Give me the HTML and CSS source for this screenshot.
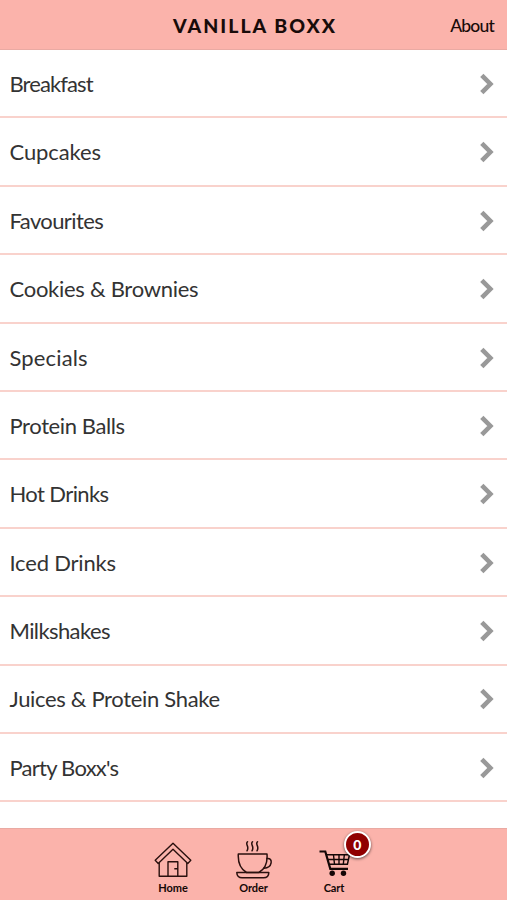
FILE: index.html
```html
<!DOCTYPE html>
<html lang="en">
<head>
    <meta charset="UTF-8">
    <meta name="viewport" content="width=device-width, initial-scale=1.0">
    <title>Vanilla Boxx</title>
    <link rel="stylesheet" href="styles.css">
</head>
<body>
<svg class="symbols" width="0" height="0">
    <symbol id="chevron" viewBox="0 0 16 22">
        <path d="M2.800 2.300 11.400 11 2.800 19.700" fill="none" stroke="#999" stroke-width="4.600"/>
    </symbol>
</svg>

<div class="header">
    <h1>VANILLA BOXX</h1>
    <a class="about" href="#">About</a>
</div>

<div class="menu">
    <a class="item" href="#"><span class="breakfast">Breakfast</span><svg class="chevron"><use href="#chevron"/></svg></a>
    <a class="item" href="#"><span class="cupcakes">Cupcakes</span><svg class="chevron"><use href="#chevron"/></svg></a>
    <a class="item" href="#"><span class="favourites">Favourites</span><svg class="chevron"><use href="#chevron"/></svg></a>
    <a class="item" href="#"><span class="cookies">Cookies &amp; Brownies</span><svg class="chevron"><use href="#chevron"/></svg></a>
    <a class="item" href="#"><span class="specials">Specials</span><svg class="chevron"><use href="#chevron"/></svg></a>
    <a class="item" href="#"><span class="protein">Protein Balls</span><svg class="chevron"><use href="#chevron"/></svg></a>
    <a class="item" href="#"><span class="hot">Hot Drinks</span><svg class="chevron"><use href="#chevron"/></svg></a>
    <a class="item" href="#"><span class="iced">Iced Drinks</span><svg class="chevron"><use href="#chevron"/></svg></a>
    <a class="item" href="#"><span class="milkshakes">Milkshakes</span><svg class="chevron"><use href="#chevron"/></svg></a>
    <a class="item" href="#"><span class="juices">Juices &amp; Protein Shake</span><svg class="chevron"><use href="#chevron"/></svg></a>
    <a class="item" href="#"><span class="party">Party Boxx's</span><svg class="chevron"><use href="#chevron"/></svg></a>
</div>

<div class="tabbar">
    <a class="tab" href="#">
        <svg class="icon" viewBox="0 0 40 40" fill="none" stroke="#2a100e" stroke-width="1.4" stroke-linejoin="round">
            <path d="M20 3.2 2.2 20.3 5.2 23.4 20 9.2 34.8 23.4 37.8 20.3Z"/>
            <path d="M6.2 22.8V36.3H33.8V22.8M15 36V21.8H24.8V36M21.3 28.8H24.5"/>
        </svg>
        <span>Home</span>
    </a>
    <a class="tab" href="#">
        <svg class="icon" viewBox="0 0 40 40" fill="none" stroke="#2a100e" stroke-width="1.5" stroke-linecap="round" stroke-linejoin="round">
            <path d="M13.500 1.800c-2.800 2.800 2.400 4.200-.5 9M18.500 1.800c-2.800 2.800 2.400 4.200-.5 9M23.500 1.800c-2.800 2.800 2.400 4.200-.5 9"/>
            <path d="M4.300 14.100H33C33.700 23 30.500 29.500 24.800 32.500H12.500C6.500 29 3.800 23 4.300 14.100Z"/>
            <path d="M33 18.500C39.500 17.500 38.500 28 30 28.200"/>
            <path d="M2.800 32.500H34.800C34.800 36 32.500 37.800 29.500 37.800H8C5 37.800 2.800 36 2.800 32.500Z"/>
        </svg>
        <span>Order</span>
    </a>
    <a class="tab" href="#">
        <svg class="icon" viewBox="0 0 40 40" fill="none" stroke="#140706" stroke-width="2">
            <path d="M5.500 11.500H11.300L16.300 28.800H34" stroke-width="2.200"/>
            <path d="M12.300 14.700H35.500L33.400 24.300H15.500M13.500 19.500H34.500" stroke-width="1.500"/>
            <path d="M19.500 15 20.500 24.300M25 15V24.300M30.300 15 29.300 24.300" stroke-width="1.400"/>
            <circle cx="18.200" cy="33.300" r="2.700" fill="#140706" stroke="none"/>
            <circle cx="29.500" cy="33.300" r="2.700" fill="#140706" stroke="none"/>
        </svg>
        <span>Cart</span>
        <b class="badge">0</b>
    </a>
</div>
</body>
</html>
```
FILE: styles.css
```css
* {
    margin: 0;
    padding: 0;
    box-sizing: border-box;
}
body {
    height: 900px;
    display: flex;
    flex-direction: column;
    overflow: hidden;
    background: #fff;
    color: #333;
    font-family: Lato, sans-serif;
}
a {
    color: inherit;
    text-decoration: none;
}
.symbols {
    position: absolute;
}
.header {
    height: 50px;
    flex: none;
    display: grid;
    grid-template-columns: 1fr auto 1fr;
    align-items: center;
    padding: 1px 13px 0;
    background: #fbb3ab;
    border-bottom: 1px solid #e9aaa3;
    color: #180b09;
}
.header h1 {
    grid-column: 2;
    padding-left: 3px;
    font-size: 19.5px;
    font-weight: 900;
    letter-spacing: 2px;
}
.about {
    justify-self: end;
    font-size: 17.5px;
    font-weight: 500;
    letter-spacing: -0.8px;
}
.menu {
    flex: 1;
    overflow: hidden;
}
.item {
    height: 68.4px;
    display: flex;
    align-items: center;
    justify-content: space-between;
    padding: 0.5px 12px 0 9.5px;
    border-bottom: 2px solid #f9d2cc;
    font-size: 22px;
}
.breakfast {
    letter-spacing: -0.9px;
}
.cupcakes {
    letter-spacing: -0.1px;
}
.favourites {
    letter-spacing: -0.6px;
}
.cookies {
    letter-spacing: -0.28px;
}
.specials {
    letter-spacing: 0.15px;
}
.protein {
    letter-spacing: -0.4px;
}
.hot {
    letter-spacing: -0.6px;
}
.iced {
    letter-spacing: -0.2px;
}
.milkshakes {
    letter-spacing: -0.6px;
}
.juices {
    letter-spacing: -0.33px;
}
.party {
    letter-spacing: -0.75px;
}
.chevron {
    width: 16px;
    height: 22px;
    margin-top: 1px;
}
.tabbar {
    height: 72px;
    flex: none;
    display: flex;
    justify-content: center;
    padding-top: 11px;
    background: #fbb3ab;
    border-top: 1px solid #e9aaa3;
    color: #140706;
}
.tab {
    position: relative;
    width: 80.5px;
    display: flex;
    flex-direction: column;
    align-items: center;
    font-size: 11px;
    font-weight: 700;
    letter-spacing: -0.1px;
    line-height: 14px;
}
.icon {
    width: 40px;
    height: 40px;
    margin-bottom: 1px;
}
.badge {
    position: absolute;
    top: -9px;
    left: 50px;
    width: 27px;
    height: 27px;
    border: 2px solid #fff;
    border-radius: 50%;
    background: #900000;
    box-shadow: 0 1px 3px rgba(0,0,0,0.6);
    color: #fff;
    font-size: 14px;
    line-height: 23px;
    text-align: center;
}
```
